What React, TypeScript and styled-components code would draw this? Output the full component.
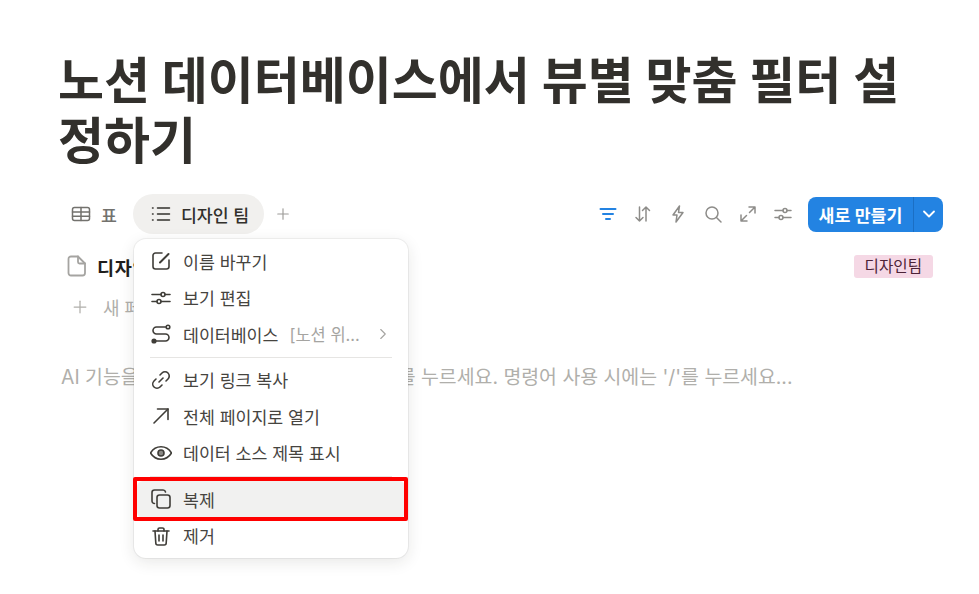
import React from 'react'
import styled, { createGlobalStyle } from 'styled-components'
import { ChevronDown, ChevronRight, Plus } from 'lucide-react'

const GlobalStyle = createGlobalStyle`
  html, body {
    margin: 0;
    padding: 0;
    background: #fff;
    overflow: hidden;
  }
  body {
    font-family: Inter, "Noto Sans CJK KR", sans-serif;
    color: #32302c;
  }
`

const Page = styled.div`
  position: relative;
  width: 979px;
  height: 594px;
  padding: 51px 36px 0 58px;
  box-sizing: border-box;
  overflow: hidden;
`

const Title = styled.h1`
  margin: 0 0 23px;
  width: 860px;
  font-size: 50px;
  line-height: 60px;
  font-weight: 700;
  color: #32302c;
  word-break: break-all;
`

const ViewBar = styled.div`
  display: flex;
  align-items: center;
  justify-content: space-between;
  height: 40px;
`

const Tabs = styled.div`
  display: flex;
  align-items: center;
`

const Tab = styled.div<{ $active?: boolean }>`
  display: flex;
  align-items: center;
  gap: 10px;
  height: 40px;
  padding: 0 ${(p) => (p.$active ? '15px' : '16px')} 0 ${(p) => (p.$active ? '18px' : '13px')};
  border-radius: 20px;
  font-size: 17.3px;
  font-weight: 500;
  color: ${(p) => (p.$active ? '#32302c' : '#73726e')};
  background: ${(p) => (p.$active ? '#f1f0ee' : 'transparent')};
`

const AddView = styled.div`
  display: flex;
  margin-left: 10px;
  color: #9b9a97;
`

const Tools = styled.div`
  display: flex;
  align-items: center;
  gap: 15px;
`

const ToolIcon = styled.svg<{ $tone?: string }>`
  flex: none;
  width: 20px;
  height: 20px;
  fill: none;
  stroke: ${(p) => p.$tone || '#8d8c89'};
  stroke-width: 1.5;
  stroke-linecap: round;
  stroke-linejoin: round;
`

const DocIcon = styled(ToolIcon)`
  width: 22px;
  height: 24px;
  stroke-width: 1.8;
`

const NewButton = styled.div`
  display: flex;
  align-items: stretch;
  height: 35px;
  width: 135px;
  border-radius: 8px;
  background: #2383e2;
  color: #fff;
  font-size: 17.3px;
  font-weight: 600;
`

const NewLabel = styled.div`
  display: flex;
  align-items: center;
  justify-content: center;
  width: 105px;
  border-right: 1px solid #1b6fc4;
`

const NewCaret = styled.div`
  display: flex;
  flex: 1;
  align-items: center;
  justify-content: center;
`

const Row = styled.div`
  display: flex;
  align-items: center;
  justify-content: space-between;
  height: 38px;
  margin-top: 13px;
  padding-left: 8px;
  padding-right: 10px;
`

const RowName = styled.div`
  display: flex;
  align-items: center;
  gap: 9px;
  font-size: 18.6px;
  letter-spacing: 0.6px;
  font-weight: 600;
  color: #1f1e1c;
  white-space: nowrap;
`

const Tag = styled.span`
  padding: 0 11px;
  height: 23px;
  line-height: 23px;
  border-radius: 3px;
  background: #f5d8e5;
  color: #4c2337;
  font-size: 15.6px;
`

const NewPage = styled.div`
  display: flex;
  align-items: center;
  gap: 13px;
  height: 34px;
  margin-top: 5px;
  padding-left: 12px;
  color: #b0afab;
  font-size: 18px;
`

const Hint = styled.p`
  margin: 41px 0 0 3px;
  font-size: 19.4px;
  line-height: 24px;
  color: #b0afab;
  white-space: nowrap;
`

const Menu = styled.div`
  position: absolute;
  left: 134px;
  top: 239px;
  width: 274px;
  box-sizing: border-box;
  padding: 4px 0 4px;
  background: #fff;
  border-radius: 12px;
  box-shadow: 0 0 0 1px rgba(40, 35, 30, 0.06), 0 4px 16px rgba(40, 35, 30, 0.11);
`

const MenuItem = styled.div<{ $hover?: boolean }>`
  display: flex;
  align-items: center;
  gap: 11px;
  height: 36.5px;
  margin: 0 ${(p) => (p.$hover ? '3px' : '16px')};
  padding: 0 ${(p) => (p.$hover ? '13px' : '0')};
  border-radius: 6px;
  font-size: 17.3px;
  color: #46443f;
  background: ${(p) => (p.$hover ? '#f1f1f0' : 'transparent')};
`

const MenuValue = styled.span`
  flex: 1;
  color: #a5a4a1;
  font-size: 16.5px;
`

const Divider = styled.div<{ $tall?: boolean }>`
  height: 1px;
  margin: ${(p) => (p.$tall ? '4.5px 16px 4.5px' : '4px 16px')};
  background: #e6e5e3;
`

const Highlight = styled.div`
  position: absolute;
  left: 133px;
  top: 477px;
  width: 275px;
  height: 44px;
  box-sizing: border-box;
  border: 4px solid #ff0000;
  border-radius: 2px;
`

const MenuGlyph = styled.svg`
  flex: none;
  width: 22px;
  height: 22px;
  fill: none;
  stroke: #3f3d38;
  stroke-width: 1.6;
  stroke-linecap: round;
  stroke-linejoin: round;
`

const iconPaths: Record<string, React.ReactNode> = {
  rename: (
    <>
      <path d="M12 3H5.500A2.500 2.500 0 0 0 3 5.500v11A2.500 2.500 0 0 0 5.500 19h11a2.500 2.500 0 0 0 2.500-2.500V10" />
      <path d="M10 12.500L18.500 4" strokeWidth={2} />
    </>
  ),
  sliders: (
    <>
      <path d="M2 7.500h9M15 7.500h5M2 14.500h5M11 14.500h9" />
      <circle cx="13" cy="7.500" r="2" />
      <circle cx="9" cy="14.500" r="2" />
    </>
  ),
  source: (
    <>
      <path d="M15.500 4H6.500a3.500 3.500 0 0 0 0 7h9a3.500 3.500 0 0 1 0 7H6" />
      <circle cx="18" cy="4" r="1.800" />
      <circle cx="4" cy="18" r="1.800" fill="#3f3d38" />
    </>
  ),
  link: (
    <>
      <path d="M9 13l4-4" />
      <path d="M10 6l2-2a4.200 4.200 0 0 1 6 6l-2 2" />
      <path d="M12 16l-2 2a4.200 4.200 0 0 1-6-6l2-2" />
    </>
  ),
  open: (
    <>
      <path d="M4 18L18 4" />
      <path d="M7.500 4H18v10.500" />
    </>
  ),
  eye: (
    <>
      <path d="M0.500 11C3 6.800 6.800 4.800 11 4.800S19 6.800 21.500 11C19 15.200 15.200 17.200 11 17.200S3 15.200 0.500 11z" />
      <circle cx="11" cy="11" r="3" fill="#8a8985" />
    </>
  ),
  copy: (
    <>
      <rect x="7" y="7" width="13" height="13" rx="2.500" />
      <path d="M4.500 15.500A2.500 2.500 0 0 1 2 13V4.500A2.500 2.500 0 0 1 4.500 2H13a2.500 2.500 0 0 1 2.500 2" />
    </>
  ),
  trash: (
    <>
      <path d="M3 6h16" />
      <path d="M8 6V4.500A1.500 1.500 0 0 1 9.500 3h3A1.500 1.500 0 0 1 14 4.500V6" />
      <path d="M5 6l.8 12a2 2 0 0 0 2 2h6.400a2 2 0 0 0 2-2L17 6" />
      <path d="M9 10v6M13 10v6" />
    </>
  ),
}

const menuTop = [
  { icon: 'rename', label: '이름 바꾸기' },
  { icon: 'sliders', label: '보기 편집' },
]

const menuMiddle = [
  { icon: 'link', label: '보기 링크 복사' },
  { icon: 'open', label: '전체 페이지로 열기' },
  { icon: 'eye', label: '데이터 소스 제목 표시' },
]

const App = () => {
  return (
    <Page>
      <GlobalStyle />
      <Title>노션 데이터베이스에서 뷰별 맞춤 필터 설정하기</Title>

      <ViewBar>
        <Tabs>
          <Tab>
            <ToolIcon $tone="#73726e" viewBox="0 0 20 20">
              <rect x="1.500" y="3.500" width="17" height="13" rx="2" />
              <path d="M1.500 8h17M1.500 12.300h17M10 3.500v13" />
            </ToolIcon>
            표
          </Tab>
          <Tab $active>
            <ToolIcon $tone="#32302c" viewBox="0 0 20 20">
              <path d="M6.500 4h12M6.500 10h12M6.500 16h12M1.500 4h.6M1.500 10h.6M1.500 16h.6" />
            </ToolIcon>
            디자인 팀
          </Tab>
          <AddView>
            <Plus size={18} strokeWidth={1.5} />
          </AddView>
        </Tabs>

        <Tools>
          <ToolIcon $tone="#2383e2" viewBox="0 0 20 20">
            <path d="M2.500 5h15M5 10h10M8 15h4" strokeWidth={2} />
          </ToolIcon>
          <ToolIcon viewBox="0 0 20 20">
            <path d="M6.500 3v14M3 13.500L6.500 17l3.500-3.500" />
            <path d="M13 17V3M9.500 6.500L13 3l3.500 3.500" />
          </ToolIcon>
          <ToolIcon viewBox="0 0 20 20">
            <path d="M11.500 2L5 11h4l-1 7 7-9.500h-4.500z" />
          </ToolIcon>
          <ToolIcon viewBox="0 0 20 20">
            <circle cx="9" cy="9" r="6" />
            <path d="M13.500 13.500L18 18" />
          </ToolIcon>
          <ToolIcon viewBox="0 0 20 20">
            <path d="M3 17L8.500 11.500M11.500 8.500L17 3M11 3h6v6M3 11v6h6" />
          </ToolIcon>
          <ToolIcon viewBox="0 0 20 20">
            <path d="M2 6.500h8M14 6.500h4M2 13.500h4M10 13.500h8" />
            <circle cx="12" cy="6.500" r="2" />
            <circle cx="8" cy="13.500" r="2" />
          </ToolIcon>
          <NewButton>
            <NewLabel>새로 만들기</NewLabel>
            <NewCaret>
              <ChevronDown size={20} strokeWidth={2.2} />
            </NewCaret>
          </NewButton>
        </Tools>
      </ViewBar>

      <Row>
        <RowName>
          <DocIcon $tone="#a5a4a1" viewBox="0 0 22 24">
            <path d="M5 2.500h7l7 7V19a2.500 2.500 0 0 1-2.500 2.500H5A2.500 2.500 0 0 1 2.500 19V5A2.500 2.500 0 0 1 5 2.500z" />
            <path d="M12 2.500V8a1.500 1.500 0 0 0 1.500 1.500H19" />
          </DocIcon>
          디자인팀 문서
        </RowName>
        <Tag>디자인팀</Tag>
      </Row>
      <NewPage>
        <Plus size={20} strokeWidth={1.5} />새 페이지
      </NewPage>
      <Hint>AI 기능을 사용하려면 먼저 꼭 스페이스 바를 누르세요. 명령어 사용 시에는 '/'를 누르세요...</Hint>

      <Menu>
        {menuTop.map((item) => (
          <MenuItem key={item.label}>
            <MenuGlyph viewBox="0 0 22 22">{iconPaths[item.icon]}</MenuGlyph>
            {item.label}
          </MenuItem>
        ))}
        <MenuItem>
          <MenuGlyph viewBox="0 0 22 22">{iconPaths.source}</MenuGlyph>
          데이터베이스
          <MenuValue>[노션 위...</MenuValue>
          <ChevronRight size={18} color="#a5a4a1" strokeWidth={1.5} />
        </MenuItem>
        <Divider />
        {menuMiddle.map((item) => (
          <MenuItem key={item.label}>
            <MenuGlyph viewBox="0 0 22 22">{iconPaths[item.icon]}</MenuGlyph>
            {item.label}
          </MenuItem>
        ))}
        <Divider $tall />
        <MenuItem $hover>
          <MenuGlyph viewBox="0 0 22 22">{iconPaths.copy}</MenuGlyph>
          복제
        </MenuItem>
        <MenuItem>
          <MenuGlyph viewBox="0 0 22 22">{iconPaths.trash}</MenuGlyph>
          제거
        </MenuItem>
      </Menu>
      <Highlight />
    </Page>
  )
}

export default App
